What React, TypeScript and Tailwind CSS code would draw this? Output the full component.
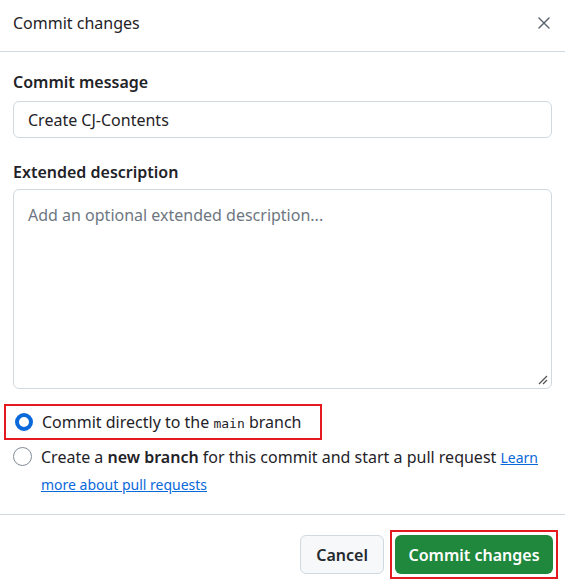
import { X } from 'lucide-react';

export default function App() {
    return (
        <div className="w-[565px] h-[587px] bg-white text-[#1f2328] font-['Noto_Sans',sans-serif] overflow-hidden">
            <div className="h-[52px] flex items-center justify-between pl-[13px] pr-[11px] pb-[6px] border-b border-[#d1d9e0]">
                <span className="text-[16px]">Commit changes</span>
                <X className="w-[20px] h-[20px] text-[#59636e]" strokeWidth={1.6} />
            </div>

            <div className="px-[13px] pt-[18px]">
                <div className="text-[16px] font-semibold leading-[24px]">Commit message</div>
                <div className="mt-[7px] h-[37px] rounded-[6px] border border-[#d1d9e0] flex items-center px-[14px] text-[16px]">
                    Create CJ-Contents
                </div>

                <div className="mt-[22px] text-[16px] font-semibold leading-[24px]">Extended description</div>
                <div className="relative mt-[5px] h-[200px] rounded-[6px] border border-[#d1d9e0] px-[14px] pt-[13px] text-[16px] text-[#6e7781]">
                    Add an optional extended description...
                    <svg className="absolute right-[3px] bottom-[3px]" width="10" height="10" viewBox="0 0 10 10">
                        <path d="M9 1L1 9M9 5L5 9" stroke="#555" strokeWidth="1.3" />
                    </svg>
                </div>
            </div>

            <div className="pl-[4px] pr-[13px] mt-[15px]">
                <div className="w-[318px] h-[36px] border-2 border-[#e3191f] flex items-center pl-[9px]">
                    <span className="w-[18px] h-[18px] rounded-full border-[4.5px] border-[#0969da] bg-white shrink-0" />
                    <span className="ml-[9px] text-[16px] text-[#1f2328]">
                        Commit directly to the <code className="font-['DejaVu_Sans_Mono',monospace] text-[13px]">main</code> branch
                    </span>
                </div>
                <div className="flex items-start pl-[9px] mt-[4px]">
                    <span className="w-[19px] h-[19px] rounded-full border border-[#818b98] bg-white shrink-0 mt-[3px]" />
                    <span className="ml-[9px] text-[16px] leading-[26px] w-[500px]">
                        Create a <b className="font-semibold">new branch</b> for this commit and start a pull request{' '}
                        <a className="text-[#0969da] underline text-[14px] leading-[26px]">Learn more about pull requests</a>
                    </span>
                </div>
            </div>

            <div className="mt-[16px] border-t border-[#d1d9e0] flex justify-end items-center gap-[6px] pr-[7px] pt-[15px]">
                <button className="h-[39px] px-[15px] rounded-[6px] border border-[#d1d9e0] bg-[#f6f8fa] text-[16px] font-semibold text-[#25292e]">
                    Cancel
                </button>
                <div className="border-2 border-[#e3191f] p-[3px]">
                    <button className="h-[39px] w-[158px] rounded-[6px] bg-[#1f883d] text-white text-[16px] font-semibold">
                        Commit changes
                    </button>
                </div>
            </div>
        </div>
    );
}
